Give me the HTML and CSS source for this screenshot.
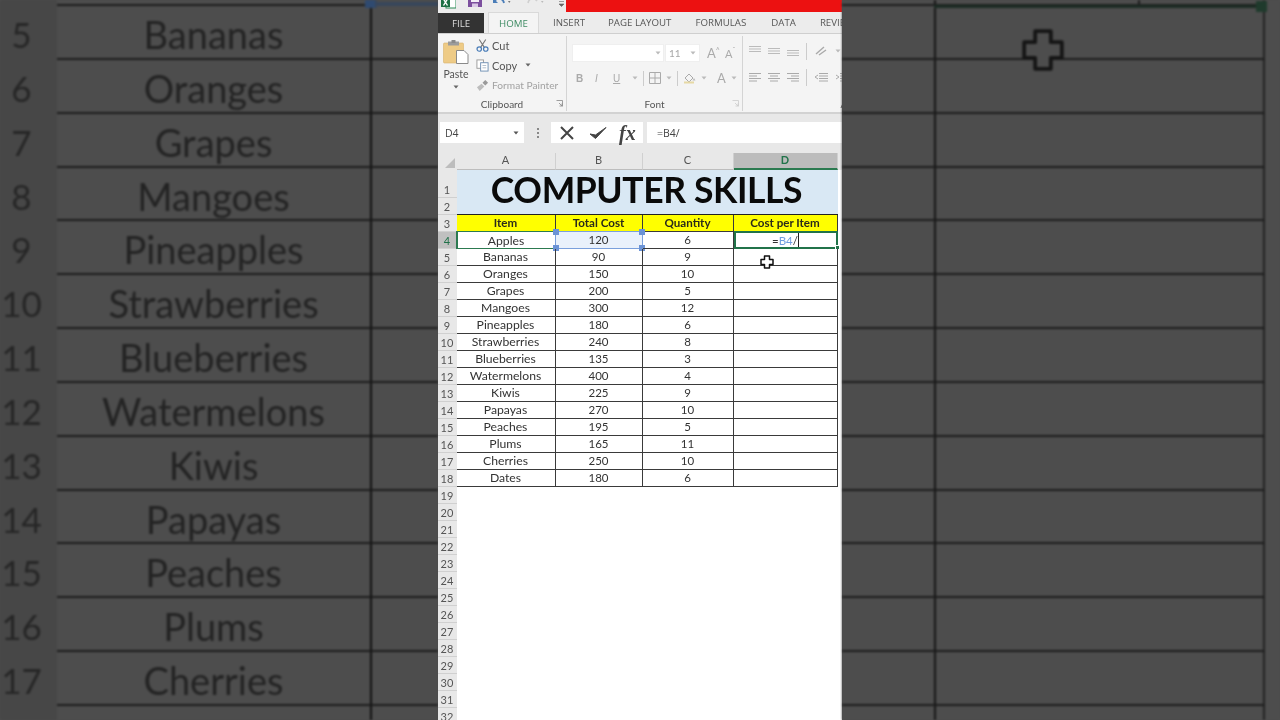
FILE: index.html
```html
<!DOCTYPE html>
<html lang="en">
<head>
<meta charset="utf-8">
<title>Computer Skills</title>
<link rel="stylesheet" href="styles.css">
</head>
<body>
<div class="stage">

<section class="side side-left">
  <div class="side-top"><span class="side-gutter"></span><span class="side-a"></span><span class="side-b"></span><i class="mark-blue"></i></div>
  <div class="side-row"><span class="side-gutter">5</span><span class="side-a">Bananas</span><span class="side-b"></span></div>
  <div class="side-row"><span class="side-gutter">6</span><span class="side-a">Oranges</span><span class="side-b"></span></div>
  <div class="side-row"><span class="side-gutter">7</span><span class="side-a">Grapes</span><span class="side-b"></span></div>
  <div class="side-row"><span class="side-gutter">8</span><span class="side-a">Mangoes</span><span class="side-b"></span></div>
  <div class="side-row"><span class="side-gutter">9</span><span class="side-a">Pineapples</span><span class="side-b"></span></div>
  <div class="side-row"><span class="side-gutter">10</span><span class="side-a">Strawberries</span><span class="side-b"></span></div>
  <div class="side-row"><span class="side-gutter">11</span><span class="side-a">Blueberries</span><span class="side-b"></span></div>
  <div class="side-row"><span class="side-gutter">12</span><span class="side-a">Watermelons</span><span class="side-b"></span></div>
  <div class="side-row"><span class="side-gutter">13</span><span class="side-a">Kiwis</span><span class="side-b"></span></div>
  <div class="side-row"><span class="side-gutter">14</span><span class="side-a">Papayas</span><span class="side-b"></span></div>
  <div class="side-row"><span class="side-gutter">15</span><span class="side-a">Peaches</span><span class="side-b"></span></div>
  <div class="side-row"><span class="side-gutter">16</span><span class="side-a">Plums</span><span class="side-b"></span></div>
  <div class="side-row"><span class="side-gutter">17</span><span class="side-a">Cherries</span><span class="side-b"></span></div>
  <div class="side-row"><span class="side-gutter"></span><span class="side-a"></span><span class="side-b"></span></div>
</section>

<section class="app">
  <div class="qat">
    <div class="qat-icons">
      <svg class="qat-excel" viewBox="0 0 15 12"><rect x="5" y="-3" width="10" height="11" fill="#fff" stroke="#2a8a55"/><rect x="0" y="-3" width="9" height="10" fill="#1e7145"/><path d="M2.500 -1 L6.500 5.500 M6.500 -1 L2.500 5.500" stroke="#fff" stroke-width="1.400"/></svg>
      <svg class="qat-save" viewBox="0 0 14 12"><path d="M0 -3H14V7H0Z" fill="#7c4f9e"/><rect x="3" y="-3" width="8" height="5" fill="#f3eef7"/><rect x="4" y="3.500" width="6" height="3.500" fill="#d9c8e6"/></svg>
      <svg class="qat-undo" viewBox="0 0 20 12"><path d="M3 1 C5 -3 11 -2 12 3" fill="none" stroke="#4a7db8" stroke-width="1.800"/><path d="M1 -2V3H6Z" fill="#4a7db8"/><path d="M16 1l2.500 0-1.250 2Z" fill="#777"/></svg>
      <svg class="qat-redo" viewBox="0 0 20 12"><path d="M12 1 C9 -3 4 -2 3 3" fill="none" stroke="#cfcfcf" stroke-width="1.600"/><path d="M16 1l2.500 0-1.250 2Z" fill="#bbb"/></svg>
      <svg class="qat-more" viewBox="0 0 8 12"><path d="M1 1.500h5M1 4h5l-2.500 2.500Z" fill="#666" stroke="#666" stroke-width=".6"/></svg>
    </div>
    <div class="redbar"></div>
  </div>

  <nav class="tabs">
    <span class="tab tab-file">FILE</span>
    <span class="tab tab-home">HOME</span>
    <span class="tab tab-insert">INSERT</span>
    <span class="tab tab-layout">PAGE LAYOUT</span>
    <span class="tab tab-formulas">FORMULAS</span>
    <span class="tab tab-data">DATA</span>
    <span class="tab tab-review">REVIEW</span>
  </nav>

  <div class="ribbon">
    <div class="group group-clip">
      <div class="clip-body">
        <div class="paste">
          <svg class="paste-icon" viewBox="0 0 26 24"><rect x="0.5" y="3" width="20" height="20" rx="1" fill="#eecb86" stroke="#d9b26c" stroke-width=".6"/><rect x="5" y="1.500" width="11" height="4" fill="#9c9c9c"/><rect x="8.500" y="0" width="4" height="3" fill="#8a8a8a"/><path d="M13.500 10.500H21L25 14.500V23.500H13.500Z" fill="#fff" stroke="#8a8a8a"/></svg>
          <span>Paste</span>
          <svg class="caret" viewBox="0 0 6 4"><path d="M0.5 .5H5.500L3 3.500Z" fill="#666"/></svg>
        </div>
        <div class="clip-cmds">
          <div class="cmd"><svg viewBox="0 0 14 14"><path d="M3.500 0.500L9 9M10.500 0.500L5 9" stroke="#777" stroke-width="1.200" fill="none"/><circle cx="3.500" cy="10.800" r="2.400" fill="none" stroke="#4a7db8" stroke-width="1.300"/><circle cx="10.500" cy="10.800" r="2.400" fill="none" stroke="#4a7db8" stroke-width="1.300"/></svg><span>Cut</span></div>
          <div class="cmd"><svg viewBox="0 0 14 14"><rect x="1" y="1" width="7" height="9" fill="#fff" stroke="#999"/><rect x="5" y="4" width="8" height="9" fill="#fff" stroke="#6f8fb3"/><path d="M7 7h4M7 9.500h4" stroke="#9ab" stroke-width=".8"/></svg><span>Copy</span><svg class="caret caret-copy" viewBox="0 0 6 4"><path d="M0.5 .5H5.500L3 3.500Z" fill="#666"/></svg></div>
          <div class="cmd cmd-off"><svg viewBox="0 0 14 14"><path d="M1 9l5-4 3 3-5 5Z" fill="#bdbdbd"/><path d="M7 4l3-3 3 3-3 3Z" fill="#9a9a9a"/></svg><span>Format Painter</span></div>
        </div>
      </div>
      <div class="group-label"><span>Clipboard</span><svg class="launch" viewBox="0 0 7 7"><path d="M0.5 .5H6.500V6.500M3 3L6 6M6 3.500V6H3.500" fill="none" stroke="#888" stroke-width=".8"/></svg></div>
    </div>

    <div class="group group-font">
      <div class="font-body">
        <div class="font-line">
          <div class="combo combo-name"><svg class="caret" viewBox="0 0 6 4"><path d="M0.5 .5H5.500L3 3.500Z" fill="#bbb"/></svg></div>
          <div class="combo combo-size"><span>11</span><svg class="caret" viewBox="0 0 6 4"><path d="M0.5 .5H5.500L3 3.500Z" fill="#bbb"/></svg></div>
          <span class="grow-a">A<sup>^</sup></span>
          <span class="shrink-a">A<sup>ˇ</sup></span>
        </div>
        <div class="font-line font-line-2">
          <b class="fmt">B</b><i class="fmt fmt-i">I</i><u class="fmt">U</u><svg class="caret" viewBox="0 0 6 4"><path d="M0.5 .5H5.500L3 3.500Z" fill="#bbb"/></svg>
          <span class="vsep"></span>
          <svg class="ico-border" viewBox="0 0 12 12"><path d="M.5 .5h11v11H.5ZM6 .5v11M.5 6h11" fill="none" stroke="#aaa"/></svg><svg class="caret" viewBox="0 0 6 4"><path d="M0.5 .5H5.500L3 3.500Z" fill="#bbb"/></svg>
          <span class="vsep"></span>
          <svg class="ico-fill" viewBox="0 0 14 12"><path d="M2 6l4-4 4 4-4 4Z" fill="none" stroke="#aaa"/><path d="M1 10.500h10" stroke="#e6d9a5" stroke-width="2"/><path d="M11 6l1.500 2.500h-3Z" fill="#bbb"/></svg><svg class="caret" viewBox="0 0 6 4"><path d="M0.5 .5H5.500L3 3.500Z" fill="#bbb"/></svg>
          <span class="letter-a">A</span><svg class="caret" viewBox="0 0 6 4"><path d="M0.5 .5H5.500L3 3.500Z" fill="#bbb"/></svg>
        </div>
      </div>
      <div class="group-label"><span>Font</span><svg class="launch launch-off" viewBox="0 0 7 7"><path d="M0.5 .5H6.500V6.500M3 3L6 6M6 3.500V6H3.500" fill="none" stroke="#ccc" stroke-width=".8"/></svg></div>
    </div>

    <div class="group group-align">
      <div class="align-body">
        <div class="align-line">
          <svg viewBox="0 0 12 12"><path d="M0 1.500h12M0 4h12M0 6.500h12" stroke="#bbb"/></svg>
          <svg viewBox="0 0 12 12"><path d="M0 3.500h12M0 6h12M0 8.500h12" stroke="#bbb"/></svg>
          <svg viewBox="0 0 12 12"><path d="M0 5.500h12M0 8h12M0 10.500h12" stroke="#bbb"/></svg>
          <span class="vsep"></span>
          <svg viewBox="0 0 14 12"><path d="M2 9L10 2M5 10L12 5" stroke="#aaa" stroke-width="1.400"/></svg>
          <svg class="caret" viewBox="0 0 6 4"><path d="M0.5 .5H5.500L3 3.500Z" fill="#bbb"/></svg>
        </div>
        <div class="align-line align-line-2">
          <svg viewBox="0 0 12 12"><path d="M0 2.500h12M0 5h8M0 7.500h12M0 10h8" stroke="#aaa"/></svg>
          <svg viewBox="0 0 12 12"><path d="M0 2.500h12M2 5h8M0 7.500h12M2 10h8" stroke="#aaa"/></svg>
          <svg viewBox="0 0 12 12"><path d="M0 2.500h12M4 5h8M0 7.500h12M4 10h8" stroke="#aaa"/></svg>
          <span class="vsep"></span>
          <svg viewBox="0 0 14 12"><path d="M5 2.500h9M5 5h9M5 7.500h9M5 10h9M4 4L1 6l3 2" fill="none" stroke="#aaa"/></svg>
          <svg viewBox="0 0 14 12"><path d="M5 2.500h9M5 5h9M5 7.500h9M5 10h9M1 4l3 2-3 2" fill="none" stroke="#aaa"/></svg>
        </div>
      </div>
      <div class="group-label"><span>Alignment</span></div>
    </div>
  </div>

  <div class="formula-bar">
    <div class="namebox"><span>D4</span><svg class="caret" viewBox="0 0 6 4"><path d="M0.5 .5H5.500L3 3.500Z" fill="#555"/></svg></div>
    <div class="grip"><i></i><i></i><i></i></div>
    <div class="fx-buttons">
      <svg class="fx-x" viewBox="0 0 16 14"><path d="M2 1L14 13M14 1L2 13" stroke="#444" stroke-width="2"/></svg>
      <svg class="fx-ok" viewBox="0 0 18 14"><path d="M1 8L6.500 12.500L17 1.500L6.500 9Z" fill="#444" stroke="#444" stroke-width="1"/></svg>
      <span class="fx-label">fx</span>
    </div>
    <div class="formula-input">=B4/</div>
  </div>

  <div class="sheet">
    <div class="corner"><svg viewBox="0 0 11 11"><path d="M11 0V11H0Z" fill="#bdbdbd"/></svg></div>
    <div class="colh">A</div><div class="colh">B</div><div class="colh">C</div><div class="colh colh-on">D</div><div class="colh colh-end"></div>

    <div class="rowh row-one">1</div><div class="title">COMPUTER SKILLS</div><div class="pad title-pad"></div>
    <div class="rowh">2</div><div class="pad"></div>

    <div class="rowh">3</div><div class="c h">Item</div><div class="c h">Total Cost</div><div class="c h">Quantity</div><div class="c h">Cost per Item</div><div class="pad"></div>

    <div class="rowh rowh-on">4</div><div class="c c-a4">Apples</div>
    <div class="c n c-ref">120<i class="hd hd-tl"></i><i class="hd hd-tr"></i><i class="hd hd-bl"></i><i class="hd hd-br"></i></div>
    <div class="c n">6</div>
    <div class="c c-active"><span class="edit">=<em>B4</em>/</span><i class="text-caret"></i><i class="fill-handle"></i></div><div class="pad"></div>

    <div class="rowh">5</div><div class="c">Bananas</div><div class="c n">90</div><div class="c n">9</div><div class="c"></div><div class="pad"></div>
    <div class="rowh">6</div><div class="c">Oranges</div><div class="c n">150</div><div class="c n">10</div><div class="c"></div><div class="pad"></div>
    <div class="rowh">7</div><div class="c">Grapes</div><div class="c n">200</div><div class="c n">5</div><div class="c"></div><div class="pad"></div>
    <div class="rowh">8</div><div class="c">Mangoes</div><div class="c n">300</div><div class="c n">12</div><div class="c"></div><div class="pad"></div>
    <div class="rowh">9</div><div class="c">Pineapples</div><div class="c n">180</div><div class="c n">6</div><div class="c"></div><div class="pad"></div>
    <div class="rowh">10</div><div class="c">Strawberries</div><div class="c n">240</div><div class="c n">8</div><div class="c"></div><div class="pad"></div>
    <div class="rowh">11</div><div class="c">Blueberries</div><div class="c n">135</div><div class="c n">3</div><div class="c"></div><div class="pad"></div>
    <div class="rowh">12</div><div class="c">Watermelons</div><div class="c n">400</div><div class="c n">4</div><div class="c"></div><div class="pad"></div>
    <div class="rowh">13</div><div class="c">Kiwis</div><div class="c n">225</div><div class="c n">9</div><div class="c"></div><div class="pad"></div>
    <div class="rowh">14</div><div class="c">Papayas</div><div class="c n">270</div><div class="c n">10</div><div class="c"></div><div class="pad"></div>
    <div class="rowh">15</div><div class="c">Peaches</div><div class="c n">195</div><div class="c n">5</div><div class="c"></div><div class="pad"></div>
    <div class="rowh">16</div><div class="c">Plums</div><div class="c n">165</div><div class="c n">11</div><div class="c"></div><div class="pad"></div>
    <div class="rowh">17</div><div class="c">Cherries</div><div class="c n">250</div><div class="c n">10</div><div class="c"></div><div class="pad"></div>
    <div class="rowh">18</div><div class="c">Dates</div><div class="c n">180</div><div class="c n">6</div><div class="c"></div><div class="pad"></div>

    <div class="rowh">19</div><div class="blank"></div>
    <div class="rowh">20</div><div class="blank"></div>
    <div class="rowh">21</div><div class="blank"></div>
    <div class="rowh">22</div><div class="blank"></div>
    <div class="rowh">23</div><div class="blank"></div>
    <div class="rowh">24</div><div class="blank"></div>
    <div class="rowh">25</div><div class="blank"></div>
    <div class="rowh">26</div><div class="blank"></div>
    <div class="rowh">27</div><div class="blank"></div>
    <div class="rowh">28</div><div class="blank"></div>
    <div class="rowh">29</div><div class="blank"></div>
    <div class="rowh">30</div><div class="blank"></div>
    <div class="rowh">31</div><div class="blank"></div>
    <div class="rowh">32</div><div class="blank"></div>

    <svg class="cursor" viewBox="0 0 14 14"><path d="M4.500 1H9.500V4.500H13V9.500H9.500V13H4.500V9.500H1V4.500H4.500Z" fill="#fff" stroke="#111" stroke-width="1.500" stroke-linejoin="round"/></svg>
  </div>
</section>

<section class="side side-right">
  <div class="side-top"><span class="side-c"></span><span class="side-d"></span><i class="mark-tick"></i><i class="mark-green"></i><i class="mark-handle"></i></div>
  <div class="side-row"><span class="side-c"></span><span class="side-d"></span></div>
  <div class="side-row"><span class="side-c"></span><span class="side-d"></span></div>
  <div class="side-row"><span class="side-c"></span><span class="side-d"></span></div>
  <div class="side-row"><span class="side-c"></span><span class="side-d"></span></div>
  <div class="side-row"><span class="side-c"></span><span class="side-d"></span></div>
  <div class="side-row"><span class="side-c"></span><span class="side-d"></span></div>
  <div class="side-row"><span class="side-c"></span><span class="side-d"></span></div>
  <div class="side-row"><span class="side-c"></span><span class="side-d"></span></div>
  <div class="side-row"><span class="side-c"></span><span class="side-d"></span></div>
  <div class="side-row"><span class="side-c"></span><span class="side-d"></span></div>
  <div class="side-row"><span class="side-c"></span><span class="side-d"></span></div>
  <div class="side-row"><span class="side-c"></span><span class="side-d"></span></div>
  <div class="side-row"><span class="side-c"></span><span class="side-d"></span></div>
  <div class="side-row"><span class="side-c"></span><span class="side-d"></span></div>
  <svg class="big-cursor" viewBox="0 0 14 14"><path d="M4.500 1H9.500V4.500H13V9.500H9.500V13H4.500V9.500H1V4.500H4.500Z" fill="#4d4d4d" stroke="#151515" stroke-width="1.200" stroke-linejoin="round"/></svg>
</section>

</div>
</body>
</html>
```
FILE: styles.css
```css
* { box-sizing: border-box; }
html, body { margin: 0; height: 100%; overflow: hidden; background: #4d4d4d; }
body { font-family: "Lato", "Liberation Sans", sans-serif; }
.stage { display: flex; width: 1280px; height: 720px; overflow: hidden; }

/* dimmed, enlarged copies of the sheet at both sides */
.side { position: relative; width: 438px; height: 720px; overflow: hidden; background: #4d4d4d; filter: blur(.9px); flex: none; color: #232323; }
.side-top { position: relative; display: flex; height: 6px; }
.side-row { display: flex; height: 53.85px; }
.side-gutter { width: 57px; flex: none; background: #474747; text-align: center; font-size: 35px; line-height: 56px; padding-right: 14px; color: #262626; white-space: nowrap; }
.side-a { width: 315px; flex: none; border-bottom: 2px solid #1c1c1c; border-right: 2px solid #111; text-align: center; font-size: 38px; line-height: 56px; white-space: nowrap; }
.side-b { flex: 1; border-bottom: 2px solid #1c1c1c; }
.side-c { width: 94px; flex: none; border-bottom: 2px solid #1c1c1c; border-right: 2px solid #161616; }
.side-d { width: 329px; flex: none; border-bottom: 2px solid #1c1c1c; border-right: 2px solid #222; }
.side-top .side-a, .side-top .side-b, .side-top .side-c, .side-top .side-d { height: 6px; }
.mark-blue { position: absolute; left: 365px; top: 0; width: 73px; height: 8px; background: linear-gradient(to right, #2f4a70 10px, #37465b 10px); clip-path: polygon(0 0, 12px 0, 12px 2px, 100% 2px, 100% 6px, 12px 6px, 12px 100%, 0 100%); }
.mark-green { position: absolute; left: 92px; top: 5px; width: 329px; height: 3px; background: #1c2c24; }
.mark-handle { position: absolute; left: 414px; top: 1px; width: 11px; height: 11px; background: #1f3a2c; }
.mark-tick { position: absolute; left: 296px; top: 0; width: 2px; height: 6px; background: #1c1c1c; }
.big-cursor { position: absolute; left: 179px; top: 28px; width: 44px; height: 44px; }

/* centre: the Excel window */
.app { position: relative; width: 404px; height: 720px; flex: none; overflow: hidden; background: #fff; display: flex; flex-direction: column; color: #444; filter: blur(.4px); }

.qat { display: flex; height: 12px; flex: none; background: #ececec; overflow: hidden; }
.qat-icons { display: flex; width: 128px; flex: none; overflow: hidden; }
.qat-icons svg { height: 12px; flex: none; }
.qat-excel { width: 15px; margin-left: 3px; }
.qat-save { width: 14px; margin-left: 12px; }
.qat-undo { width: 20px; margin-left: 10px; }
.qat-redo { width: 20px; margin-left: 13px; }
.qat-more { width: 8px; margin-left: 13px; }
.redbar { flex: 1; height: 12px; background: #ec1111; }

.tabs { display: flex; align-items: flex-end; height: 22px; flex: none; background: #ececec; border-bottom: 1px solid #cfcfcf; font-family: "Open Sans", "Liberation Sans", sans-serif; font-size: 9.700px; white-space: nowrap; overflow: hidden; }
.tab { display: flex; align-items: center; height: 21px; color: #555; flex: none; }
.tab-file { width: 46px; height: 20px; background: #333; color: #ddd; justify-content: center; }
.tab-home { width: 51px; margin-left: 4px; height: 21px; background: #f4f4f4; color: #3f8c64; justify-content: center; border: 1px solid #d9d9d9; border-bottom: 0; }
.tab-insert { margin-left: 14px; }
.tab-layout { margin-left: 23px; }
.tab-formulas { margin-left: 24px; }
.tab-data { margin-left: 25px; }
.tab-review { margin-left: 24px; }

.ribbon { display: flex; height: 80px; flex: none; background: #f4f4f4; border-bottom: 2px solid #d2d2d2; overflow: hidden; }
.group { display: flex; flex-direction: column; flex: none; height: 75px; margin-top: 2px; border-right: 1px solid #d4d4d4; }
.group-clip { width: 129px; }
.group-font { width: 176px; }
.group-align { width: 240px; border-right: 0; }
.group-label { position: relative; height: 15px; flex: none; display: flex; justify-content: center; align-items: center; font-size: 10px; color: #555; }
.launch { position: absolute; right: 3px; top: 4px; width: 7px; height: 7px; }
.caret { width: 6px; height: 4px; flex: none; }

.clip-body { flex: 1; display: flex; }
.paste { width: 36px; margin-right: 2px; flex: none; display: flex; flex-direction: column; align-items: center; padding: 4px 0 0 0; font-size: 10.500px; color: #555; }
.paste-icon { width: 26px; height: 24px; margin-bottom: 3px; }
.paste span { line-height: 14px; }
.paste .caret { margin-top: 4px; }
.clip-cmds { display: flex; flex-direction: column; padding-top: 2px; gap: 6px; }
.cmd { display: flex; align-items: center; gap: 3px; height: 14px; font-size: 11px; color: #555; white-space: nowrap; }
.cmd svg { width: 13px; height: 13px; flex: none; }
.cmd .caret-copy { width: 6px; height: 4px; margin-left: 5px; }
.cmd-off { font-size: 10.200px; color: #a2a2a2; }

.font-body { flex: 1; display: flex; flex-direction: column; padding: 8px 0 0 5px; gap: 7px; }
.font-line { display: flex; align-items: center; height: 18px; }
.combo { height: 18px; background: #fff; display: flex; align-items: center; justify-content: flex-end; padding-right: 2px; border: 1px solid #efefef; }
.combo-name { width: 92px; }
.combo-size { width: 35px; margin-left: 1px; justify-content: space-between; padding: 0 3px 0 3px; font-size: 10px; color: #a8a8a8; }
.grow-a, .shrink-a { color: #aaa; margin-left: 7px; width: 14px; font-size: 13px; }
.shrink-a { margin-left: 4px; font-size: 11px; }
.grow-a sup, .shrink-a sup { font-size: 7px; line-height: 0; }
.font-line-2 { height: 16px; margin-top: 1px; padding-left: 4px; font-size: 10px; color: #aaa; }
.fmt { width: 19px; font-family: "Liberation Sans", sans-serif; }
.fmt-i { width: 18px; }
.vsep { width: 1px; height: 15px; background: #ccc; margin: 0 5px; flex: none; }
.ico-border { width: 12px; height: 12px; margin-right: 5px; }
.ico-fill { width: 14px; height: 12px; margin-right: 4px; }
.letter-a { margin-left: 10px; margin-right: 5px; font-size: 13px; }

.align-body { flex: 1; display: flex; flex-direction: column; padding: 6px 0 0 6px; gap: 8px; }
.align-line { display: flex; align-items: center; gap: 7px; height: 18px; }
.align-line svg { width: 12px; height: 12px; flex: none; }
.align-line .caret { width: 6px; height: 4px; }
.align-line .vsep { margin: 0; height: 17px; }
.align-line svg:nth-of-type(4) { width: 14px; }
.align-line-2 svg:nth-of-type(5) { width: 14px; }

.formula-bar { display: flex; align-items: center; height: 39px; flex: none; background: #e8e8e8; padding: 0 0 2px 2px; }
.namebox { width: 84px; height: 21px; background: #fff; display: flex; align-items: center; justify-content: space-between; padding: 0 5px; font-size: 10.500px; color: #444; font-family: "Open Sans", sans-serif; }
.grip { width: 27px; display: flex; flex-direction: column; align-items: center; gap: 2px; }
.grip i { width: 2px; height: 2px; background: #888; }
.fx-buttons { width: 92px; height: 21px; background: #fff; display: flex; align-items: center; padding-left: 8px; }
.fx-x { width: 16px; height: 14px; }
.fx-ok { width: 18px; height: 14px; margin-left: 14px; }
.fx-label { margin-left: 12px; font-family: "Liberation Serif", serif; font-style: italic; font-weight: 700; font-size: 20px; line-height: 20px; color: #444; }
.formula-input { flex: 1; height: 21px; margin-left: 4px; background: #fff; display: flex; align-items: center; padding-left: 10px; font-size: 10.500px; color: #444; font-family: "Open Sans", sans-serif; }

.sheet { position: relative; flex: none; display: grid; grid-template-columns: 19px 99px 87px 91px 104px 4px; grid-template-rows: 17px 28px 17px; grid-auto-rows: 17px; font-size: 12.200px; color: #333; background: #fff; }
.corner { height: 17px; background: #e8e8e8; display: flex; align-items: flex-end; justify-content: flex-end; padding: 0 2px 2px 0; }
.corner svg { width: 10px; height: 10px; }
.colh { background: #e8e8e8; border-right: 1px solid #d0d0d0; border-bottom: 1px solid #bdbdbd; text-align: center; line-height: 14px; font-size: 11px; color: #555; padding-right: 1px; }
.colh-on { background: #bcbcbc; color: #21734a; border-bottom: 2px solid #2b7a50; font-weight: 700; }
.colh-end { background: #e8e8e8; border: 0; }
.rowh { background: #e8e8e8; border-bottom: 1px solid #d0d0d0; text-align: center; font-size: 11px; line-height: 17px; color: #555; padding-right: 1px; }
.row-one { height: 28px; line-height: 40px; }
.rowh-on { background: #c0c0c0; color: #1f7148; }
.title { grid-column: 2 / 6; grid-row: 2 / 4; background: #d9e8f4; text-align: center; font-size: 35.500px; font-weight: 700; line-height: 40px; color: #0a0a0a; white-space: nowrap; letter-spacing: -.4px; border-bottom: 1px solid #222; padding-right: 2px; }
.pad { background: #fff; }
.title-pad { grid-column: 6; }
.blank { grid-column: 2 / 7; }
.c { position: relative; text-align: center; line-height: 16px; border-right: 1px solid #3a3a3a; border-bottom: 1px solid #3a3a3a; white-space: nowrap; padding-right: 1px; }
.n { font-size: 11.500px; }
.h { background: #ffff00; font-size: 11.600px; font-weight: 700; color: #2b2b1a; }
.c-a4 { border-left: 2px solid #2c7a50; margin: -1px 0 0 -1px; border-top: 1px solid #2c7a50; border-bottom: 1px solid #2c7a50; line-height: 17px; }
.c-ref { background: #e9f1fb; border: 1.500px solid #7aa0dc; margin: -1px 0 0 -1px; line-height: 16px; }
.c-active { border: 2px solid #21734a; margin-top: -1px; line-height: 16px; }
.edit { position: absolute; left: 36px; top: 0; color: #333; font-size: 11.500px; }
.edit em { font-style: normal; color: #6f9ce0; }
.text-caret { position: absolute; left: 62px; top: 0; width: 1px; height: 14px; background: #222; }
.fill-handle { position: absolute; right: -4px; bottom: -3px; width: 5px; height: 5px; background: #21734a; border: 1px solid #fff; }
.hd { position: absolute; width: 6px; height: 6px; background: #6b93d6; }
.hd-tl { left: -3px; top: -3px; }
.hd-tr { right: -3px; top: -3px; }
.hd-bl { left: -3px; bottom: -3px; }
.hd-br { right: -3px; bottom: -3px; }
.cursor { position: absolute; left: 322px; top: 102px; width: 14px; height: 14px; }
```
